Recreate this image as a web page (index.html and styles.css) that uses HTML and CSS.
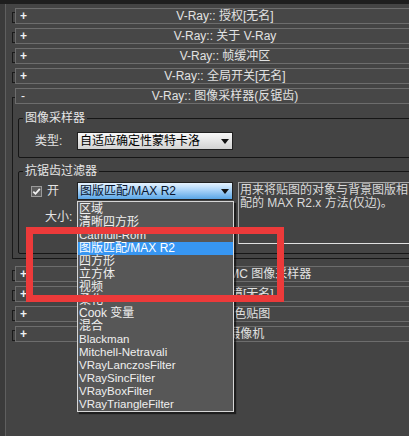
FILE: index.html
```html
<!DOCTYPE html>
<html>
<head>
<meta charset="utf-8">
<link rel="stylesheet" href="styles.css">
</head>
<body>
<div class="top"></div>
<div class="wrap">
  <div class="edge"></div>
  <div class="rolls">
    <div class="roll"><div class="brk"></div><div class="head"><span class="sign">+</span><span class="title">V-Ray:: 授权[无名]</span></div></div>
    <div class="roll"><div class="brk"></div><div class="head"><span class="sign">+</span><span class="title">V-Ray:: 关于 V-Ray</span></div></div>
    <div class="roll"><div class="brk"></div><div class="head"><span class="sign">+</span><span class="title">V-Ray:: 帧缓冲区</span></div></div>
    <div class="roll"><div class="brk"></div><div class="head"><span class="sign">+</span><span class="title">V-Ray:: 全局开关[无名]</span></div></div>
    <div class="roll open">
      <div class="brk"></div>
      <div class="openmain">
        <div class="head"><span class="sign minus">-</span><span class="title">V-Ray:: 图像采样器(反锯齿)</span></div>
        <div class="body">
          <fieldset class="grp g1">
            <legend>图像采样器</legend>
            <div class="row">
              <span class="lbl-type">类型:</span>
              <div class="dd"><span>自适应确定性蒙特卡洛</span><svg width="8" height="5" viewBox="0 0 8 5"><path d="M0 0H8L4 5Z" fill="#111"/></svg></div>
            </div>
          </fieldset>
          <fieldset class="grp g2">
            <legend>抗锯齿过滤器</legend>
            <div class="fgrid">
              <div class="fleft">
                <div class="row">
                  <svg class="chk" width="11" height="11" viewBox="0 0 11 11"><rect x="0.5" y="0.5" width="10" height="10" fill="#5c5c5c" stroke="#9a9a9a"/><path d="M2.3 5.6L4.5 7.8L8.8 2.8" fill="none" stroke="#f2f2f2" stroke-width="1.8"/></svg>
                  <span class="lbl-on">开</span>
                  <div class="dd dd-blue"><span>图版匹配/MAX R2</span><svg width="8" height="5" viewBox="0 0 8 5"><path d="M0 0H8L4 5Z" fill="#111"/></svg></div>
                </div>
                <div class="lbl-size">大小:</div>
              </div>
              <div class="desc">用来将贴图的对象与背景图版相配的 MAX R2.x 方法(仅边)。</div>
            </div>
          </fieldset>
        </div>
      </div>
    </div>
    <div class="roll"><div class="brk"></div><div class="head"><span class="sign">+</span><span class="title">V-Ray:: 自适应 DMC 图像采样器</span></div></div>
    <div class="roll"><div class="brk"></div><div class="head"><span class="sign">+</span><span class="title">V-Ray:: 环境[无名]</span></div></div>
    <div class="roll"><div class="brk"></div><div class="head"><span class="sign">+</span><span class="title">V-Ray:: 颜色贴图</span></div></div>
    <div class="roll"><div class="brk"></div><div class="head"><span class="sign">+</span><span class="title">V-Ray:: 摄像机</span></div></div>
  </div>
</div>

<div class="list">
  <div>区域</div>
  <div>清晰四方形</div>
  <div class="en">Catmull-Rom</div>
  <div class="sel">图版匹配/MAX R2</div>
  <div>四方形</div>
  <div>立方体</div>
  <div>视频</div>
  <div>柔化</div>
  <div>Cook 变量</div>
  <div>混合</div>
  <div class="en">Blackman</div>
  <div class="en">Mitchell-Netravali</div>
  <div class="en">VRayLanczosFilter</div>
  <div class="en">VRaySincFilter</div>
  <div class="en">VRayBoxFilter</div>
  <div class="en">VRayTriangleFilter</div>
</div>

<div class="mark"></div>
</body>
</html>
```

FILE: styles.css
```css
* { box-sizing: border-box; }
html, body { margin: 0; padding: 0; }
body {
  width: 409px;
  height: 436px;
  overflow: hidden;
  position: relative;
  background: #444444;
  color: #e4e4e4;
  font-family: "Liberation Sans", "Noto Sans CJK SC", sans-serif;
  font-size: 12px;
  line-height: 14px;
}
.top { height: 4px; background: #1e1e1e; }
.wrap { display: flex; height: 432px; width: 409px; overflow: hidden; }
.edge { width: 6px; flex: none; background: #3b3b3b; border-right: 1px solid #5f5f5f; }
.rolls { padding: 4px 0 0 6px; flex: none; }
.roll { display: flex; margin-bottom: 4px; width: 423px; }
.brk {
  width: 3px; flex: none;
  margin-top: 4px; height: 11px;
  border: 1px solid #1a1a1a; border-right: none;
}
.head {
  width: 420px; height: 16px;
  border: 1px solid #6d6d6d;
  background: #474747;
  display: grid;
  grid-template-columns: 20px 1fr 20px;
  align-items: center;
  line-height: 14px;
}
.sign { padding-left: 4px; font-weight: bold; color: #f2f2f2; }
.minus { padding-left: 5px; font-weight: normal; }
.title { text-align: center; color: #e2e2e2; white-space: nowrap; }
.open { margin-bottom: 7px; }
.open .brk { height: auto; margin-top: 9px; border-right: none; border-top: 1px solid #1a1a1a; }
.openmain { width: 420px; }
.body { border-bottom: 1px solid #161616; padding: 7px 0 4px; }
.grp {
  margin: 0 3px; padding: 0 4px 7px;
  border: 1px solid #161616; border-radius: 2px;
  min-width: 0;
}
.g2 { margin-top: 6px; padding-bottom: 9px; }
legend { padding: 0 2px; line-height: 14px; color: #e6e6e6; }
.row { display: flex; align-items: center; }
.g1 .row { margin-top: 7px; }
.lbl-type { width: 54px; padding-left: 12px; }
.dd {
  width: 156px; height: 18px;
  border: 1px solid #202020;
  background: linear-gradient(#f8f8f8, #d2d2d2);
  color: #000;
  display: flex; align-items: center; justify-content: space-between;
  padding: 0 3px 0 2px;
  white-space: nowrap;
}
.dd-blue { background: linear-gradient(#e6f3ff 0%, #a9d3f8 45%, #5aa6e6 100%); color: #08152e; }
.fgrid { display: flex; margin-top: 4px; }
.fleft { width: 215px; flex: none; }
.chk { margin-left: 8px; flex: none; }
.lbl-on { margin-left: 5px; width: 30px; }
.lbl-size { margin: 10px 0 0 22px; }
.desc {
  width: 178px; height: 62px; flex: none;
  border: 1px solid #a8a8a8; border-bottom-color: #e0e0e0; border-right: none;
  padding: 1px 0 0 1px;
  line-height: 13px;
  color: #dadada;
}
.list {
  position: absolute; left: 77px; top: 201px;
  width: 157px;
  border: 1px solid #d6d6d6;
  background: #575757;
  box-shadow: 2px 2px 1px rgba(0,0,0,0.55);
  padding-top: 1px;
}
.list div { height: 13px; line-height: 13px; padding-left: 1px; white-space: nowrap; color: #efefef; }
.list .en { font-size: 11.5px; }
.list .sel { background: #3796f2; color: #ffffff; }
.mark {
  position: absolute; left: 26px; top: 227px;
  width: 258px; height: 75px;
  border: 7px solid #ec3a3a;
}
```
